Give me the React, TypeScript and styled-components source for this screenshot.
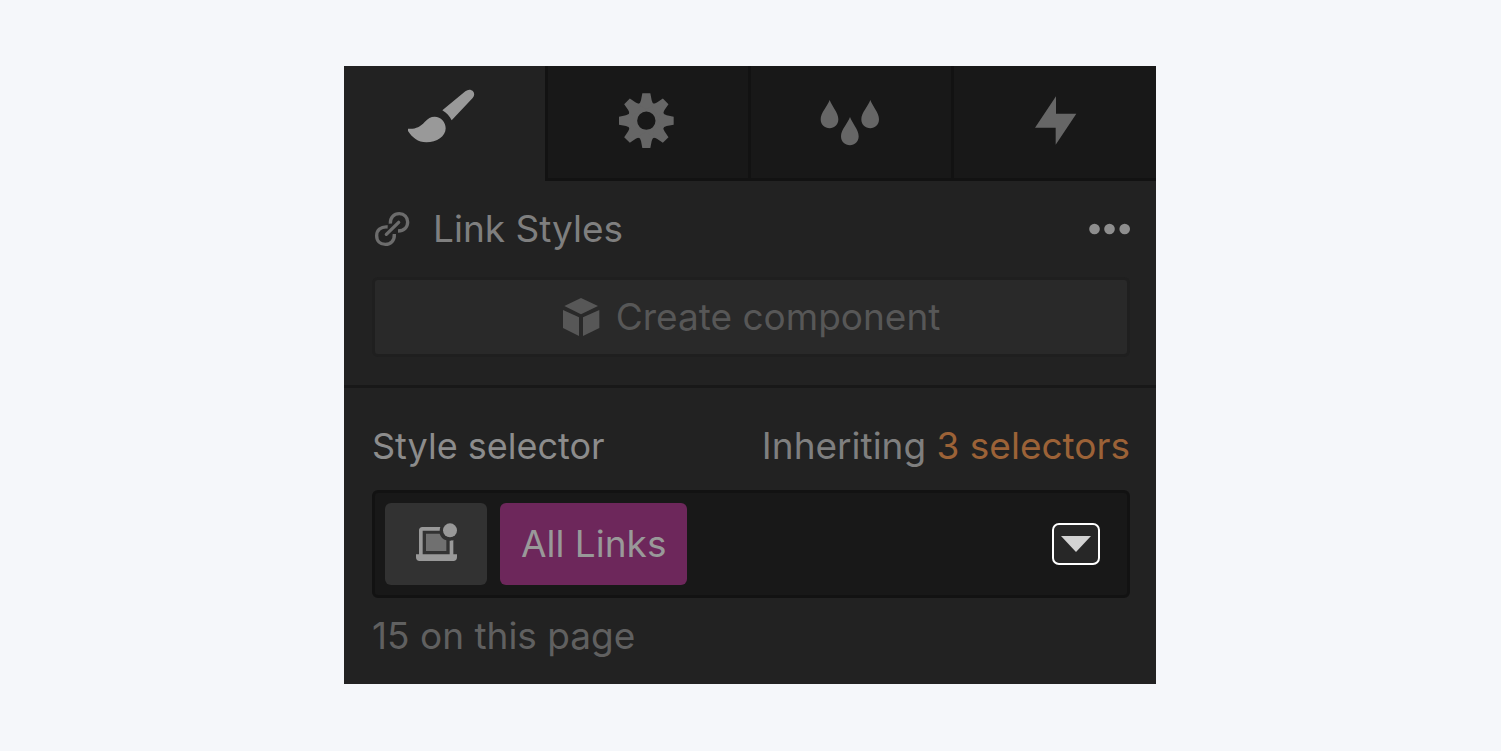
import React from "react";
import styled, { createGlobalStyle } from "styled-components";

const GlobalStyle = createGlobalStyle`
  *, *::before, *::after { box-sizing: border-box; }
  body {
    margin: 0;
    background: #f5f7fa;
    font-family: Inter, "Liberation Sans", sans-serif;
    font-size: 37px;
    line-height: 48px;
  }
  button {
    font: inherit;
    margin: 0;
    padding: 0;
    border: 0;
    cursor: pointer;
  }
  svg { display: block; flex: none; }
`;

const Page = styled.main`
  min-height: 100vh;
  padding: 66px 25px 66px 24px;
  background: #f5f7fa;
`;

const Panel = styled.section`
  max-width: 812px;
  margin: 0 auto;
  background: #222222;
`;

const Tabs = styled.div`
  display: grid;
  grid-template-columns: 201fr 203fr 203fr 205fr;
`;

const Tab = styled.button<{ $active?: boolean }>`
  display: flex;
  align-items: center;
  justify-content: center;
  height: 115px;
  color: ${(p) => (p.$active ? "#999999" : "#666666")};
  background: ${(p) => (p.$active ? "#222222" : "#181818")};
  border-bottom: 3px solid ${(p) => (p.$active ? "#222222" : "#121212")};
  box-shadow: ${(p) => (p.$active ? "none" : "inset 3px 0 #121212")};
`;

const Section = styled.div<{ $divided?: boolean }>`
  display: flex;
  flex-direction: column;
  padding: ${(p) => (p.$divided ? "34px 26px 24px 28px" : "24px 26px 28px 28px")};
  border-top: ${(p) => (p.$divided ? "3px solid #181818" : "0")};
`;

const Row = styled.div`
  display: flex;
  align-items: center;
  justify-content: space-between;
`;

const Title = styled.h2`
  display: flex;
  align-items: center;
  gap: 20px;
  margin: 0;
  font-size: 37px;
  font-weight: 400;
  color: #7f7f7f;
`;

const MoreButton = styled.button`
  display: flex;
  color: #8e8e8e;
  background: transparent;
`;

const CreateButton = styled.button`
  display: flex;
  align-items: center;
  justify-content: center;
  gap: 16px;
  height: 80px;
  margin-top: 24px;
  color: #575757;
  background: #292929;
  border: 3px solid #1f1f1f;
  border-radius: 6px;
`;

const SelectorLabel = styled.h3`
  margin: 0;
  font-size: 36px;
  font-weight: 400;
  color: #8c8c8c;
`;

const Inheriting = styled.span`
  color: #7f7f7f;
`;

const InheritLink = styled.a`
  color: #9c6237;
  text-decoration: none;
`;

const SelectorField = styled.div`
  display: flex;
  align-items: center;
  gap: 13px;
  height: 108px;
  margin: 20px 0 14px;
  padding: 0 27px 0 10px;
  background: #181818;
  border: 3px solid #121212;
  border-radius: 6px;
`;

const Chip = styled.button<{ $variant: "state" | "class" }>`
  display: flex;
  align-items: center;
  justify-content: center;
  height: 82px;
  width: ${(p) => (p.$variant === "state" ? "102px" : "auto")};
  padding: ${(p) => (p.$variant === "state" ? "0" : "0 21px")};
  color: #999999;
  background: ${(p) => (p.$variant === "state" ? "#323232" : "#6d275b")};
  border-radius: 6px;
`;

const DropdownButton = styled.button`
  display: flex;
  align-items: center;
  justify-content: center;
  width: 48px;
  height: 42px;
  margin-left: auto;
  color: #d3d3d3;
  background: #272727;
  border: 2px solid #ffffff;
  border-radius: 7px;
`;

const Count = styled.p`
  margin: 0;
  color: #606060;
`;

const BrushIcon = () => (
  <svg width="81" height="72" viewBox="192 78 243 216" fill="currentColor" aria-hidden="true">
    <path d="M307 151L376 94C384 88 393 88 399 94C404 100 404 107 398 114L335 181C329 169 319 158 307 151Z" />
    <path d="M204 206C225 208 239 202 254 186C264 175 272 170 284 170C303 170 317 186 317 205C317 229 291 247 259 247C234 247 216 232 204 213Z" />
  </svg>
);

const teeth = [0, 45, 90, 135, 180, 225, 270, 315];

const GearIcon = () => (
  <svg width="81" height="72" viewBox="198 78 243 216" fill="currentColor" aria-hidden="true">
    <g transform="translate(319 182)">
      <circle r="41" fill="none" stroke="currentColor" strokeWidth="27" />
      {teeth.map((angle) => (
        <path
          key={angle}
          transform={`rotate(${angle})`}
          d="M-12 -82H12L16 -61Q17 -53 25 -48L0 -34L-25 -48Q-17 -53 -16 -61Z"
        />
      ))}
    </g>
  </svg>
);

const DropsIcon = () => (
  <svg width="81" height="72" viewBox="207 78 243 216" fill="currentColor" aria-hidden="true">
    <path d="M269 120C275 138 295 158 295 178C295 194 283 205 269 205C254 205 242 194 242 178C242 158 263 138 269 120Z" />
    <path d="M391 120C397 138 417 158 417 178C417 194 405 205 391 205C376 205 364 194 364 178C364 158 385 138 391 120Z" />
    <path d="M330 171C336 189 356 209 356 229C356 245 344 256 330 256C315 256 303 245 303 229C303 209 324 189 330 171Z" />
  </svg>
);

const BoltIcon = () => (
  <svg width="81" height="72" viewBox="219 78 243 216" fill="currentColor" aria-hidden="true">
    <path d="M348 109V161H409L347 254V203H285Z" />
  </svg>
);

const LinkIcon = () => (
  <svg
    width="41"
    height="38"
    viewBox="96 60 123 114"
    fill="none"
    stroke="#6c6c6c"
    strokeWidth="10"
    aria-hidden="true"
  >
    <path d="M151 101C150 82 162 71 178 71C193 71 203 82 203 96C203 112 192 123 174 123" />
    <path d="M143 111C122 109 110 121 110 137C110 153 121 163 136 163C153 163 164 151 163 132" />
    <path d="M139 133L176 97" strokeLinecap="round" />
  </svg>
);

const MoreIcon = () => (
  <svg width="42" height="12" viewBox="0 0 42 12" fill="currentColor" aria-hidden="true">
    <circle cx="6.500" cy="6" r="5.300" />
    <circle cx="21.500" cy="6" r="5.300" />
    <circle cx="36.700" cy="6" r="5.300" />
  </svg>
);

const CubeIcon = () => (
  <svg width="38" height="38" viewBox="63 86 114 114" fill="currentColor" aria-hidden="true">
    <path d="M120 86L171 110L120 135L70 110Z" />
    <path d="M66 122L114 144V200L66 176Z" />
    <path d="M175 122L126 144V200L175 176Z" />
  </svg>
);

const DeviceIcon = () => (
  <svg width="42" height="42" viewBox="165 129 126 126" aria-hidden="true">
    <path d="M198 161H239C242 171 249 178 259 181V213H198Z" fill="#707070" />
    <path
      d="M241 141H187C181 141 177 145 177 151V223H168V232C168 239 172 243 179 243H280C287 243 291 239 291 232V223H280V180C276 182 272 182 269 182V223H188V152H239C239 148 240 144 241 141Z"
      fill="#999999"
    />
    <circle cx="270" cy="151" r="21" fill="#999999" />
  </svg>
);

const CaretIcon = () => (
  <svg width="32" height="16" viewBox="0 0 32 16" fill="currentColor" aria-hidden="true">
    <path d="M1 0H31L16 16Z" />
  </svg>
);

export default function App() {
  return (
    <>
      <GlobalStyle />
      <Page>
        <Panel aria-label="Style panel">
          <Tabs role="tablist">
            <Tab $active role="tab" aria-selected="true" aria-label="Style">
              <BrushIcon />
            </Tab>
            <Tab role="tab" aria-selected="false" aria-label="Settings">
              <GearIcon />
            </Tab>
            <Tab role="tab" aria-selected="false" aria-label="Style manager">
              <DropsIcon />
            </Tab>
            <Tab role="tab" aria-selected="false" aria-label="Interactions">
              <BoltIcon />
            </Tab>
          </Tabs>
          <Section>
            <Row>
              <Title>
                <LinkIcon />
                Link Styles
              </Title>
              <MoreButton aria-label="More options">
                <MoreIcon />
              </MoreButton>
            </Row>
            <CreateButton>
              <CubeIcon />
              Create component
            </CreateButton>
          </Section>
          <Section $divided>
            <Row>
              <SelectorLabel>Style selector</SelectorLabel>
              <Inheriting>
                Inheriting <InheritLink href="#selectors">3 selectors</InheritLink>
              </Inheriting>
            </Row>
            <SelectorField>
              <Chip $variant="state" aria-label="Breakpoint">
                <DeviceIcon />
              </Chip>
              <Chip $variant="class">All Links</Chip>
              <DropdownButton aria-label="Show states">
                <CaretIcon />
              </DropdownButton>
            </SelectorField>
            <Count>15 on this page</Count>
          </Section>
        </Panel>
      </Page>
    </>
  );
}
